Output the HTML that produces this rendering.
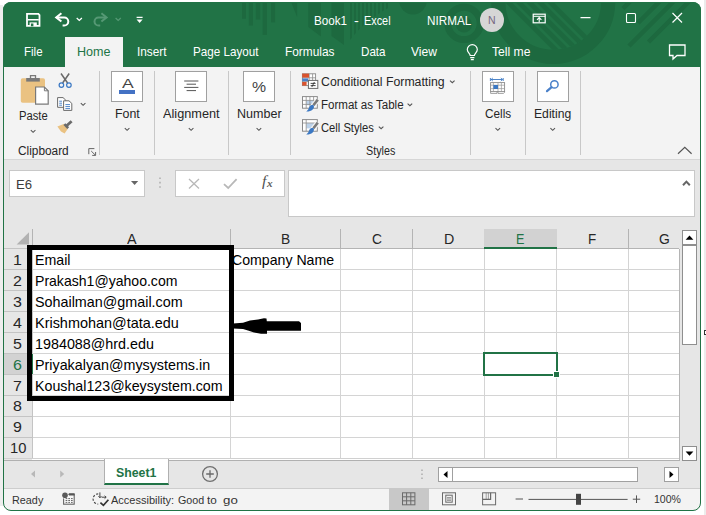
<!DOCTYPE html>
<html lang="en"><head><meta charset="utf-8"><title>Book1 - Excel</title>
<style>
html,body{margin:0;padding:0;background:#fff;}
body{width:706px;height:515px;overflow:hidden;font-family:"Liberation Sans",sans-serif;}
#app{position:relative;width:706px;height:515px;overflow:hidden;background:#fff;}
#clip{position:absolute;left:0;top:0;width:706px;height:515px;clip-path:inset(2px 5px 4px 3px round 8px);background:#e6e6e6;}
#frame{position:absolute;left:3px;top:2px;width:698px;height:509px;box-sizing:border-box;border:1px solid #217346;border-radius:8px;}
.a{position:absolute;box-sizing:border-box;}
.t{position:absolute;white-space:pre;line-height:1;transform-origin:0 0;display:block;}
.box{position:absolute;box-sizing:border-box;background:#fff;border:1px solid #a0a0a0;}
.sep{position:absolute;width:1px;top:71px;height:84px;background:#c8c8c8;}
.hl{position:absolute;height:1px;background:#d4d4d4;left:32px;width:647px;}
.vl{position:absolute;width:1px;background:#d4d4d4;top:249px;height:210px;}
.hs{position:absolute;width:1px;background:#b4b4b4;top:229px;height:19px;}
.rl{position:absolute;height:1px;background:#c4c4c4;left:4px;width:28px;}
svg{position:absolute;overflow:visible;}

</style></head>
<body>
<div id="app">
<div id="clip">
<!-- title + tab row -->
<div class="a" id="titlebar" style="left:0;top:0;width:706px;height:67px;background:#217346;"></div>
<svg id="deco" style="left:0;top:0" width="706" height="67" viewBox="0 0 706 67">
 <defs>
  <clipPath id="cpDisc"><circle cx="553.25" cy="2" r="47.75"/></clipPath>
  <clipPath id="cpHatch"><path d="M348,0 H392 V6 C380,12 362,24 350,40 H348 Z"/></clipPath>
 </defs>
 <g fill="#1d693f">
  <rect x="242" y="0" width="4" height="18.7"/><rect x="248.8" y="0" width="4.2" height="25.5"/><rect x="255.8" y="0" width="4.4" height="19.5"/><rect x="262.6" y="0" width="4.4" height="34.8"/><rect x="271.1" y="0" width="4" height="22.4"/>
  <polygon points="290.3,0 297.1,0 297.1,17"/>
  <polygon points="308.2,0 320.9,0 320.9,36.5 308.2,27"/>
  <polygon points="331.5,0 344,0 344,45 331.5,36"/>
  <path d="M399,0 A14,14.5 0 0 0 427,0 Z"/>
  <circle cx="464" cy="24.5" r="8"/>
 </g>
 <g clip-path="url(#cpHatch)" stroke="#1d693f" stroke-width="2">
  <path d="M351,0 V45 M355,0 V45 M359,0 V45 M363,0 V45 M367,0 V45 M371,0 V45 M375,0 V45 M379,0 V45 M383,0 V45 M387,0 V45"/>
 </g>
 <g fill="none" stroke="#1d693f">
  <circle cx="553.25" cy="2" r="54.9" stroke-width="14.25"/>
  <circle cx="464" cy="23.4" r="16.2" stroke-width="7"/>
 </g>
 <g clip-path="url(#cpDisc)" stroke="#1d693f" stroke-width="4.6">
  <path d="M496,-10 L566,60 M506.5,-10 L576.5,60 M517,-10 L587,60 M527.5,-10 L597.5,60 M538,-10 L608,60"/>
 </g>
 <g stroke="#1d693f" stroke-width="4.4">
  <path d="M623,8.5 L632,-0.5 M638,23 L662,-1 M629,46 L676,-1 M648.5,42 L692,-1.5"/>
 </g>
</svg>
<div class="a" id="hometab" style="left:65px;top:37px;width:58px;height:30px;background:#f3f3f3;"></div>
<!-- ribbon -->
<div class="a" id="ribbon" style="left:0;top:67px;width:706px;height:92px;background:#f3f3f3;"></div>
<div class="a" style="left:0;top:159px;width:706px;height:1px;background:#d6d6d6;"></div>
<div class="sep" style="left:99px"></div><div class="sep" style="left:154px"></div><div class="sep" style="left:228px"></div><div class="sep" style="left:290px"></div><div class="sep" style="left:470px"></div><div class="sep" style="left:525px"></div><div class="sep" style="left:580px"></div>
<div class="box" style="left:111px;top:71px;width:32px;height:31px"></div>
<div class="box" style="left:175px;top:71px;width:32px;height:31px"></div>
<div class="box" style="left:243px;top:71px;width:32px;height:31px"></div>
<div class="box" style="left:482px;top:71px;width:32px;height:31px"></div>
<div class="box" style="left:537px;top:71px;width:32px;height:31px"></div>
<div class="a" style="left:119px;top:90px;width:16px;height:4px;background:#4472c4"></div>
<!-- formula bar -->
<div class="box" style="left:9px;top:170px;width:136px;height:27px;border-color:#c8c8c8"></div>
<div class="box" style="left:175px;top:170px;width:110px;height:27px;border-color:#c8c8c8"></div>
<div class="box" style="left:288px;top:170px;width:407px;height:47px;border-color:#c8c8c8"></div>
<!-- grid -->
<div class="a" id="gridbg" style="left:32px;top:249px;width:647px;height:211px;background:#fff"></div>
<div class="a" id="hdr6" style="left:4px;top:354px;width:28px;height:21px;background:#d2d2d2;"></div>
<div class="a" style="left:4px;top:248px;width:28px;height:1px;background:#c4c4c4"></div>
<div class="a" style="left:32px;top:248px;width:647px;height:1px;background:#b4b4b4"></div>
<div class="hl" style="top:269px"></div>
<div class="rl" style="top:269px"></div>
<div class="hl" style="top:290px"></div>
<div class="rl" style="top:290px"></div>
<div class="hl" style="top:311px"></div>
<div class="rl" style="top:311px"></div>
<div class="hl" style="top:332px"></div>
<div class="rl" style="top:332px"></div>
<div class="hl" style="top:353px"></div>
<div class="rl" style="top:353px"></div>
<div class="hl" style="top:374px"></div>
<div class="rl" style="top:374px"></div>
<div class="hl" style="top:395px"></div>
<div class="rl" style="top:395px"></div>
<div class="hl" style="top:416px"></div>
<div class="rl" style="top:416px"></div>
<div class="hl" style="top:437px"></div>
<div class="rl" style="top:437px"></div>
<div class="vl" style="left:230px"></div>
<div class="hs" style="left:230px"></div>
<div class="vl" style="left:340px"></div>
<div class="hs" style="left:340px"></div>
<div class="vl" style="left:412px"></div>
<div class="hs" style="left:412px"></div>
<div class="vl" style="left:484px"></div>
<div class="hs" style="left:484px"></div>
<div class="vl" style="left:556px"></div>
<div class="hs" style="left:556px"></div>
<div class="vl" style="left:628px"></div>
<div class="hs" style="left:628px"></div>
<div class="hs" style="left:32px"></div>
<div class="a" style="left:32px;top:249px;width:1px;height:210px;background:#c4c4c4"></div>
<div class="a" id="hdrE" style="left:484px;top:229px;width:73px;height:20px;background:#d2d2d2;border-bottom:2px solid #217346"></div>
<div class="a" style="left:4px;top:458px;width:675px;height:1px;background:#d0d0d0"></div>
<div class="a" style="left:4px;top:460px;width:676px;height:1px;background:#b0b0b0"></div>
<div class="a" style="left:679px;top:249px;width:1px;height:211px;background:#b4b4b4"></div>
<!-- selection -->
<div class="a" id="sel" style="left:483px;top:352px;width:75px;height:24px;border:2px solid #217346;"></div>
<div class="a" style="left:553px;top:371px;width:7px;height:7px;background:#fff"></div>
<div class="a" style="left:554px;top:372px;width:5px;height:5px;background:#217346"></div>
<!-- vertical scrollbar -->
<div class="box" style="left:682px;top:230px;width:15px;height:15px;border-color:#8f8f8f"></div>
<div class="box" style="left:682px;top:245px;width:15px;height:100px;border-color:#8f8f8f"></div>
<div class="box" style="left:682px;top:446px;width:15px;height:15px;border-color:#8f8f8f"></div>
<svg style="left:682px;top:230px" width="15" height="15"><polygon points="3.6,9.8 11.4,9.8 7.5,5.4" fill="#000"/></svg>
<svg style="left:682px;top:446px" width="15" height="15"><polygon points="3.6,5.4 11.4,5.4 7.5,9.8" fill="#000"/></svg>
<!-- sheet tab bar -->
<div class="a" id="sheettab" style="left:104px;top:459px;width:65px;height:26px;background:#fff;border-bottom:2px solid #217346;border-right:1px solid #b0b0b0;border-left:1px solid #b0b0b0"></div>
<div class="box" style="left:438px;top:467px;width:15px;height:15px"></div>
<div class="box" style="left:452px;top:467px;width:186px;height:15px"></div>
<div class="box" style="left:664px;top:467px;width:15px;height:15px"></div>
<svg style="left:438px;top:467px" width="15" height="15"><polygon points="9.5,4 9.5,11 5.5,7.5" fill="#000"/></svg>
<svg style="left:664px;top:467px" width="15" height="15"><polygon points="5.5,4 5.5,11 9.5,7.5" fill="#000"/></svg>
<!-- status bar -->
<div class="a" id="status" style="left:0;top:488px;width:706px;height:27px;background:#f3f3f3;border-top:1px solid #cdcdcd"></div>
<div class="a" style="left:389px;top:488px;width:40px;height:23px;background:#c8c8c8"></div>
<!-- QAT -->
<svg style="left:0;top:0" width="706" height="67" viewBox="0 0 706 67" fill="none" stroke="#fff" stroke-width="1.4">
 <!-- save -->
 <path d="M27,13.9 H38.4 L39.5,15 V25.9 H27 Z" stroke-width="1.8"/>
 <path d="M27.6,19.8 H38.8" stroke-width="1.6"/>
 <rect x="29.6" y="22.4" width="7.2" height="3.6" fill="#fff" stroke="none"/>
 <rect x="30.9" y="23.5" width="2.5" height="2.8" fill="#217346" stroke="none"/>
 <!-- undo -->
 <path d="M61.4,13.3 L56.2,17.4 L61.4,21.5" stroke-width="2"/>
 <path d="M56.6,17.4 H64.2 A4.1,4.1 0 0 1 64.2,25.6 H62.6" stroke-width="2"/>
 <path d="M76.7,18 L79.3,20.4 L81.9,18" stroke-width="1.3"/>
 <!-- redo dim -->
 <g stroke="#559874">
 <path d="M101.4,13.3 L106.6,17.4 L101.4,21.5" stroke-width="2"/>
 <path d="M106.2,17.4 H98.6 A4.1,4.1 0 0 0 98.6,25.6 H100.2" stroke-width="2"/>
 <path d="M115.6,18 L118.2,20.4 L120.8,18" stroke-width="1.3"/>
 </g>
 <!-- customize -->
 <path d="M136.6,17.4 H142.6" stroke-width="1.3"/>
 <polygon points="136.6,19.6 142.6,19.6 139.6,23" fill="#fff" stroke="none"/>
 <!-- ribbon display options -->
 <rect x="533.2" y="14.2" width="12" height="8.6" stroke-width="1.2"/>
 <path d="M533.2,16.3 H545.2" stroke-width="1"/>
 <path d="M539.2,22 V18 M537,19.8 L539.2,17.6 L541.4,19.8" stroke-width="1.1"/>
 <!-- min / max / close -->
 <path d="M580.5,17.6 H590.5" stroke-width="1.1"/>
 <rect x="626.5" y="13.5" width="9" height="9" rx="1" stroke-width="1.1"/>
 <path d="M672.5,13 L682,22.5 M682,13 L672.5,22.5" stroke-width="1.2"/>
 <!-- lightbulb -->
 <path d="M470.2,55.5 C470.2,53.5 467.3,52.5 467.3,49.6 A5,5 0 0 1 477.3,49.6 C477.3,52.5 474.4,53.5 474.4,55.5 Z" stroke-width="1.2"/>
 <path d="M470.2,57.6 H474.4 M470.8,59.6 H473.8" stroke-width="1.1"/>
 <!-- comment -->
 <path d="M669.5,45 H685 V55.5 H677 L673,59 V55.5 H669.5 Z" stroke-width="1.3"/>
</svg>
<!-- avatar -->
<div class="a" style="left:480px;top:8px;width:24px;height:24px;border-radius:12px;background:#d6d6d6"></div>
<!-- ribbon icons -->
<svg style="left:0;top:0" width="706" height="160" viewBox="0 0 706 160" fill="none">
 <!-- paste -->
 <rect x="20.8" y="78.2" width="24.2" height="24.5" rx="1.8" fill="#eac282"/>
 <rect x="26.2" y="78" width="13.6" height="3.6" fill="#797979"/>
 <path d="M30.5,78.5 V75.6 H35.5 V78.5" stroke="#797979" stroke-width="1.3"/>
 <path d="M35.6,87 H44.4 L48.2,90.8 V104.2 H35.6 Z" fill="#fff" stroke="#797979" stroke-width="1.2"/>
 <path d="M44.4,87 V90.8 H48.2" stroke="#797979" stroke-width="1"/>
 <path d="M30.8,130.2 L33.1,132.3 L35.4,130.2" stroke="#555" stroke-width="1.1"/>
 <!-- scissors -->
 <path d="M61,73.5 L67.6,83 M69.2,73.5 L62.6,83" stroke="#6a6a6a" stroke-width="1.5"/>
 <circle cx="61.4" cy="85.1" r="2.3" stroke="#3b78c3" stroke-width="1.2"/>
 <circle cx="68.9" cy="85.1" r="2.3" stroke="#3b78c3" stroke-width="1.2"/>
 <!-- copy -->
 <path d="M57.6,97.6 H63 L65.8,100.2 V107.3 H57.6 Z" fill="#fff" stroke="#6a6a6a" stroke-width="1"/>
 <path d="M63.6,100.8 H69 L71.8,103.4 V110.4 H63.6 Z" fill="#fff" stroke="#6a6a6a" stroke-width="1"/>
 <path d="M59.2,101.2 H62 M59.2,103.2 H62 M59.2,105.2 H62 M65.4,104.6 H70 M65.4,106.6 H70 M65.4,108.6 H70" stroke="#3b78c3" stroke-width="0.9"/>
 <path d="M80.8,103.2 L83.1,105.3 L85.4,103.2" stroke="#555" stroke-width="1.1"/>
 <!-- format painter -->
 <polygon points="57.4,126.6 63.6,124 68,128.6 64.6,133.6 61,131.4" fill="#eac282"/>
 <path d="M64.4,124.2 L68.2,128.2" stroke="#6a6a6a" stroke-width="2.6"/>
 <path d="M66.6,125.8 L71.6,121.2" stroke="#6a6a6a" stroke-width="2.8"/>
 <!-- clipboard launcher -->
 <path d="M88.8,154.2 V148.6 H94.4" stroke="#666" stroke-width="1"/>
 <path d="M91.2,151 L95.4,155.2 M95.6,152 V155.4 H92.2" stroke="#666" stroke-width="1"/>
 <!-- chevrons under big buttons -->
 <g stroke="#555" stroke-width="1.1">
 <path d="M124.8,128.2 L127.1,130.3 L129.4,128.2"/>
 <path d="M188.8,128.2 L191.1,130.3 L193.4,128.2"/>
 <path d="M256.6,128.2 L258.9,130.3 L261.2,128.2"/>
 <path d="M495.5,128.2 L497.8,130.3 L500.1,128.2"/>
 <path d="M550.4,128.2 L552.7,130.3 L555,128.2"/>
 <path d="M450,80.6 L452.3,82.7 L454.6,80.6"/>
 <path d="M407.6,103.6 L409.9,105.7 L412.2,103.6"/>
 <path d="M378.8,126.6 L381.1,128.7 L383.4,126.6"/>
 </g>
 <!-- alignment lines -->
 <path d="M184.2,81 H198.4 M186.6,84.2 H196 M184.2,87.4 H198.4 M186.6,90.6 H196" stroke="#555" stroke-width="1"/>
 <!-- collapse ribbon -->
 <path d="M678,153.8 L684.8,147.4 L691.6,153.8" stroke="#555" stroke-width="1.2"/>
</svg>
<svg style="left:0;top:0" width="706" height="160" viewBox="0 0 706 160" fill="none">
 <!-- conditional formatting -->
 <rect x="302.4" y="73.8" width="13.2" height="11.8" fill="#fff" stroke="#8a8a8a" stroke-width="0.9"/>
 <path d="M302.4,77.8 H315.6 M302.4,81.6 H315.6 M309.2,73.8 V85.6 M312.6,73.8 V85.6" stroke="#8a8a8a" stroke-width="0.8"/>
 <rect x="302.2" y="73.6" width="6.8" height="4" fill="#d9532e"/>
 <rect x="302.2" y="78.4" width="6" height="2.8" fill="#4a80c9"/>
 <rect x="302.2" y="82" width="4.4" height="3.6" fill="#d9532e"/>
 <rect x="308.4" y="80.4" width="9.4" height="8" fill="#fff" stroke="#6a6a6a" stroke-width="1"/>
 <path d="M310.6,83.4 H315.6 M310.6,85.6 H315.6 M314.4,82 L311.8,87" stroke="#333" stroke-width="0.9"/>
 <!-- format as table -->
 <g id="fat">
 <rect x="302.5" y="96.6" width="14.8" height="11.6" fill="#fff" stroke="#8a8a8a" stroke-width="1"/>
 <rect x="306.4" y="100.6" width="7.4" height="4.6" fill="#bcd2ea"/>
 <path d="M302.5,100.4 H317.3 M302.5,104.4 H317.3 M306.2,96.6 V108.2 M309.9,96.6 V108.2 M313.6,96.6 V108.2" stroke="#8a8a8a" stroke-width="0.8"/>
 <path d="M318,99.4 L312.6,106.2" stroke="#f3f3f3" stroke-width="5"/>
 <path d="M317.8,99.6 L313.4,105.2" stroke="#7a7a7a" stroke-width="2.6"/>
 <path d="M313.8,105.4 C314.6,108.6 311.6,111.6 306.2,111.4 C308.4,110.2 308.6,108.4 309.4,106.8 C310.4,105 312.4,104.4 313.8,105.4 Z" fill="#3b78c3"/>
 </g>
 <!-- cell styles -->
 <rect x="302.5" y="119.6" width="14.8" height="11.6" fill="#fff" stroke="#8a8a8a" stroke-width="1"/>
 <rect x="306.4" y="123.2" width="7.6" height="5.2" fill="#bcd2ea"/>
 <path d="M302.5,123 H317.3 M306.2,119.6 V131.2" stroke="#8a8a8a" stroke-width="0.8"/>
 <path d="M318,122.4 L312.6,129.2" stroke="#f3f3f3" stroke-width="5"/>
 <path d="M317.8,122.6 L313.4,128.2" stroke="#7a7a7a" stroke-width="2.6"/>
 <path d="M313.8,128.4 C314.6,131.6 311.6,134.6 306.2,134.4 C308.4,133.2 308.6,131.4 309.4,129.8 C310.4,128 312.4,127.4 313.8,128.4 Z" fill="#3b78c3"/>
</svg>
<svg style="left:0;top:0" width="706" height="160" viewBox="0 0 706 160" fill="none">
 <!-- cells icon -->
 <path d="M490.4,78 V81 M503.2,78 V81 M491,79.5 H502.6 M492.8,78 L491.2,79.5 L492.8,81 M500.8,78 L502.4,79.5 L500.8,81" stroke="#3b78c3" stroke-width="0.9"/>
 <rect x="490.6" y="82.6" width="14" height="9" fill="#fff" stroke="#8a8a8a" stroke-width="0.9"/>
 <path d="M490.6,85.2 H504.6 M490.6,88.6 H504.6 M493.4,82.6 V91.6 M498,82.6 V91.6 M501.4,82.6 V91.6" stroke="#9a9a9a" stroke-width="0.7"/>
 <rect x="493.4" y="85" width="4.6" height="4" fill="#3b78c3"/>
 <path d="M490.6,91.6 V93.4 H497 V91.6 M498,91.6 V93.4 H503.4 L504.6,92.4 V91.6" stroke="#8a8a8a" stroke-width="0.8"/>
 <!-- editing magnifier -->
 <circle cx="554.4" cy="84.4" r="3.7" stroke="#4a80c9" stroke-width="1.5" fill="#fff"/>
 <path d="M551.6,87.2 L547,91.2" stroke="#4a80c9" stroke-width="2.2" stroke-linecap="round"/>
</svg>
<svg style="left:0;top:160px" width="706" height="70" viewBox="0 160 706 70" fill="none">
 <polygon points="131,181 138.2,181 134.6,185" fill="#666"/>
 <path d="M160,177.4 V179 M160,181.8 V183.4 M160,186.2 V187.8" stroke="#a8a8a8" stroke-width="1.4"/>
 <path d="M189,179 L199,188.5 M199,179 L189,188.5" stroke="#b8b8b8" stroke-width="1.3"/>
 <path d="M224,184.2 L228.2,188 L236.6,179.2" stroke="#b8b8b8" stroke-width="1.8"/>
 <path d="M683,185.2 L686.4,181.6 L689.8,185.2" stroke="#666" stroke-width="2"/>
 <polygon points="16.6,244.5 29,244.5 29,232.3" fill="#b2b2b2"/>
</svg>
<div class="a" style="left:32px;top:354px;width:1px;height:20px;background:#217346"></div>
<svg style="left:0;top:455px" width="706" height="60" viewBox="0 455 706 60" fill="none">
 <!-- sheet nav -->
 <polygon points="35,470.6 35,477.4 31,474" fill="#b8b8b8"/>
 <polygon points="60.2,470.6 60.2,477.4 64.2,474" fill="#b8b8b8"/>
 <!-- new sheet -->
 <circle cx="210" cy="474" r="7.4" stroke="#707070" stroke-width="1.3"/>
 <path d="M206.2,474 H213.8 M210,470.2 V477.8" stroke="#6a6a6a" stroke-width="1.3"/>
 <!-- hscroll grip dots -->
 <path d="M422,469.4 V471 M422,473.4 V475 M422,477.4 V479" stroke="#a8a8a8" stroke-width="1.4"/>
 <!-- macro record icon -->
 <rect x="63.6" y="494.4" width="10.6" height="9.8" stroke="#666" stroke-width="1.1" fill="#f8f8f8"/>
 <path d="M69,494.4 H74.6" stroke="#555" stroke-width="2.2"/>
 <circle cx="65" cy="495.3" r="3.4" fill="#f3f3f3"/>
 <circle cx="65" cy="495.3" r="2.8" fill="#5a5a5a"/>
 <path d="M65.6,498.6 H72.8 M65.6,500.5 H72.8 M65.6,502.4 H72.8" stroke="#666" stroke-width="1" stroke-dasharray="1.7 1"/>
 <!-- accessibility icon -->
 <path d="M98.2,493.9 A5.1,5.1 0 0 0 98.2,504.1" stroke="#444" stroke-width="1.1" stroke-dasharray="2.2 1.5"/>
 <path d="M99.9,492.4 V497.6 M98.5,496.2 L99.9,497.8 L101.3,496.2" stroke="#444" stroke-width="1"/>
 <path d="M101.6,497.2 H106 M104.6,495.8 L106.2,497.2 L104.6,498.6" stroke="#444" stroke-width="1"/>
 <path d="M100.4,502.6 L103.4,505.4 L108.4,499.8" stroke="#333" stroke-width="1.7"/>
 <!-- view buttons -->
 <g stroke="#6a6a6a" stroke-width="1">
 <rect x="402.5" y="492.8" width="12.4" height="12"/>
 <path d="M402.5,496.8 H414.9 M402.5,500.8 H414.9 M406.6,492.8 V504.8 M410.8,492.8 V504.8"/>
 <rect x="442.5" y="492.8" width="13" height="12"/>
 <rect x="445.8" y="495.2" width="6.4" height="7"/>
 <path d="M447,497.6 H451 M447,499 H451 M447,500.4 H451" stroke-width="0.7"/>
 <rect x="482.6" y="492.8" width="13" height="12"/>
 <path d="M490.6,492.8 V499.4 H482.6" stroke-width="1.2"/>
 <path d="M486.2,492.8 V499.4 M488.4,492.8 V499.4" stroke-width="0.6"/>
 </g>
 <!-- zoom slider -->
 <path d="M515.6,499 H523 M528.5,499.4 H627.6" stroke="#555" stroke-width="1"/>
 <path d="M632.8,499.2 H640.2 M636.5,495.4 V503" stroke="#555" stroke-width="1"/>
 <rect x="576" y="493.8" width="5" height="11" fill="#444"/>
</svg>

<!-- black annotation -->
<div class="a" id="blackbox" style="left:27px;top:245px;width:207px;height:156px;border:5px solid #000"></div>
<svg style="left:0;top:0" width="706" height="515"><polygon points="233,323.4 243,322.8 250,320.6 258,319.4 264,318.2 266.5,318.4 266.8,321.2 299,321.2 301,323 301,330.7 267,330.7 267,333.8 261,333.8 254,332.4 248,330.6 243,329 233,328.6" fill="#000"/></svg>
</div>
<div class="a" style="left:0;top:5px;width:3px;height:501px;background:#eee"></div>
<div id="frame"></div>
<div class="a" style="left:704px;top:0;width:2px;height:515px;background:#ececec"></div>
<div class="a" style="left:704px;top:330px;width:4px;height:5px;border:1px solid #333;background:#fff"></div>

<span class="t" id="t0" style="left:313.7px;top:14.00px;font-size:13px;color:#fff;font-weight:normal;transform:scaleX(0.8974);">Book1</span>
<span class="t" id="t1" style="left:353.7px;top:14.00px;font-size:13px;color:#fff;font-weight:normal;transform:scaleX(1.1032);">-</span>
<span class="t" id="t2" style="left:364.2px;top:14.00px;font-size:13px;color:#fff;font-weight:normal;transform:scaleX(0.8363);">Excel</span>
<span class="t" id="t3" style="left:427.0px;top:14.00px;font-size:13px;color:#fff;font-weight:normal;transform:scaleX(0.9016);">NIRMAL</span>
<span class="t" id="t4" style="left:488.1px;top:14.69px;font-size:11px;color:#75677f;font-weight:normal;transform:scaleX(0.9586);">N</span>
<span class="t" id="t5" style="left:23.8px;top:45.87px;font-size:12.2px;color:#fff;font-weight:normal;transform:scaleX(0.9432);">File</span>
<span class="t" id="t6" style="left:136.8px;top:45.87px;font-size:12.2px;color:#fff;font-weight:normal;transform:scaleX(0.9685);">Insert</span>
<span class="t" id="t7" style="left:192.8px;top:45.87px;font-size:12.2px;color:#fff;font-weight:normal;transform:scaleX(0.9572);">Page Layout</span>
<span class="t" id="t8" style="left:284.8px;top:45.87px;font-size:12.2px;color:#fff;font-weight:normal;transform:scaleX(0.9750);">Formulas</span>
<span class="t" id="t9" style="left:360.8px;top:45.87px;font-size:12.2px;color:#fff;font-weight:normal;transform:scaleX(0.9524);">Data</span>
<span class="t" id="t10" style="left:411.3px;top:45.87px;font-size:12.2px;color:#fff;font-weight:normal;transform:scaleX(0.9932);">View</span>
<span class="t" id="t11" style="left:492.3px;top:45.87px;font-size:12.2px;color:#fff;font-weight:normal;transform:scaleX(0.9978);">Tell me</span>
<span class="t" id="t12" style="left:76.8px;top:45.87px;font-size:12.2px;color:#217346;font-weight:normal;transform:scaleX(1.0310);">Home</span>
<span class="t" id="t13" style="left:18.8px;top:109.54px;font-size:12px;color:#262626;font-weight:normal;transform:scaleX(0.9355);">Paste</span>
<span class="t" id="t14" style="left:114.7px;top:107.64px;font-size:12px;color:#262626;font-weight:normal;transform:scaleX(1.0330);">Font</span>
<span class="t" id="t15" style="left:162.7px;top:107.64px;font-size:12px;color:#262626;font-weight:normal;transform:scaleX(1.0606);">Alignment</span>
<span class="t" id="t16" style="left:236.6px;top:107.64px;font-size:12px;color:#262626;font-weight:normal;transform:scaleX(1.0450);">Number</span>
<span class="t" id="t17" style="left:484.7px;top:107.64px;font-size:12px;color:#262626;font-weight:normal;transform:scaleX(0.9789);">Cells</span>
<span class="t" id="t18" style="left:533.9px;top:107.64px;font-size:12px;color:#262626;font-weight:normal;transform:scaleX(1.0138);">Editing</span>
<span class="t" id="t19" style="left:18.0px;top:144.84px;font-size:12px;color:#262626;font-weight:normal;transform:scaleX(0.9870);">Clipboard</span>
<span class="t" id="t20" style="left:365.7px;top:144.64px;font-size:12px;color:#262626;font-weight:normal;transform:scaleX(0.8966);">Styles</span>
<span class="t" id="t21" style="left:320.9px;top:75.84px;font-size:12px;color:#262626;font-weight:normal;transform:scaleX(1.0246);">Conditional Formatting</span>
<span class="t" id="t22" style="left:320.9px;top:99.14px;font-size:12px;color:#262626;font-weight:normal;transform:scaleX(0.9625);">Format as Table</span>
<span class="t" id="t23" style="left:320.9px;top:121.84px;font-size:12px;color:#262626;font-weight:normal;transform:scaleX(0.9333);">Cell Styles</span>
<span class="t" id="t24" style="left:121.8px;top:76.63px;font-size:13.2px;color:#444;font-weight:normal;transform:scaleX(1.3310);">A</span>
<span class="t" id="t25" style="left:252.3px;top:79.33px;font-size:15.2px;color:#444;font-weight:normal;transform:scaleX(1.0415);">%</span>
<span class="t" id="t26" style="left:16.2px;top:177.66px;font-size:13.4px;color:#3c3c3c;font-weight:normal;transform:scaleX(0.9838);">E6</span>
<span class="t" id="t27" style="left:262.4px;top:173.28px;font-size:15.5px;color:#505050;font-weight:normal;transform:scaleX(1.0203);font-family:'Liberation Serif',serif;font-style:italic;">f</span>
<span class="t" id="t28" style="left:266.6px;top:178.71px;font-size:10.5px;color:#5e5e5e;font-weight:bold;transform:scaleX(1.0667);font-family:'Liberation Serif',serif;font-style:italic;">x</span>
<span class="t" id="t29" style="left:127.0px;top:231.81px;font-size:14.4px;color:#262626;font-weight:normal;transform:scaleX(0.9990);">A</span>
<span class="t" id="t30" style="left:280.8px;top:231.81px;font-size:14.4px;color:#262626;font-weight:normal;transform:scaleX(0.9584);">B</span>
<span class="t" id="t31" style="left:371.8px;top:231.81px;font-size:14.4px;color:#262626;font-weight:normal;transform:scaleX(0.9619);">C</span>
<span class="t" id="t32" style="left:443.8px;top:231.81px;font-size:14.4px;color:#262626;font-weight:normal;transform:scaleX(0.9907);">D</span>
<span class="t" id="t33" style="left:588.4px;top:231.81px;font-size:14.4px;color:#262626;font-weight:normal;transform:scaleX(0.9332);">F</span>
<span class="t" id="t34" style="left:659.1px;top:231.81px;font-size:14.4px;color:#262626;font-weight:normal;transform:scaleX(0.9649);">G</span>
<span class="t" id="t35" style="left:516.1px;top:231.81px;font-size:14.4px;color:#217346;font-weight:normal;transform:scaleX(0.8751);">E</span>
<span class="t" id="t36" style="left:13.3px;top:252.81px;font-size:14.4px;color:#262626;font-weight:normal;transform:scaleX(1.1115);">1</span>
<span class="t" id="t37" style="left:13.3px;top:273.76px;font-size:14.4px;color:#262626;font-weight:normal;transform:scaleX(1.1115);">2</span>
<span class="t" id="t38" style="left:13.3px;top:294.71px;font-size:14.4px;color:#262626;font-weight:normal;transform:scaleX(1.1115);">3</span>
<span class="t" id="t39" style="left:13.3px;top:315.66px;font-size:14.4px;color:#262626;font-weight:normal;transform:scaleX(1.1115);">4</span>
<span class="t" id="t40" style="left:13.3px;top:336.61px;font-size:14.4px;color:#262626;font-weight:normal;transform:scaleX(1.1115);">5</span>
<span class="t" id="t41" style="left:13.3px;top:357.56px;font-size:14.4px;color:#217346;font-weight:normal;transform:scaleX(1.1115);">6</span>
<span class="t" id="t42" style="left:13.3px;top:378.51px;font-size:14.4px;color:#262626;font-weight:normal;transform:scaleX(1.1115);">7</span>
<span class="t" id="t43" style="left:13.3px;top:399.46px;font-size:14.4px;color:#262626;font-weight:normal;transform:scaleX(1.1115);">8</span>
<span class="t" id="t44" style="left:13.3px;top:420.41px;font-size:14.4px;color:#262626;font-weight:normal;transform:scaleX(1.1115);">9</span>
<span class="t" id="t45" style="left:9.5px;top:441.36px;font-size:14.4px;color:#262626;font-weight:normal;transform:scaleX(1.0246);">10</span>
<span class="t" id="t46" style="left:35.3px;top:252.81px;font-size:14.4px;color:#000;font-weight:normal;transform:scaleX(0.9868);">Email</span>
<span class="t" id="t47" style="left:35.3px;top:273.76px;font-size:14.4px;color:#000;font-weight:normal;transform:scaleX(0.9768);">Prakash1@yahoo.com</span>
<span class="t" id="t48" style="left:35.3px;top:294.71px;font-size:14.4px;color:#000;font-weight:normal;transform:scaleX(0.9968);">Sohailman@gmail.com</span>
<span class="t" id="t49" style="left:35.3px;top:315.66px;font-size:14.4px;color:#000;font-weight:normal;transform:scaleX(1.0034);">Krishmohan@tata.edu</span>
<span class="t" id="t50" style="left:35.3px;top:336.61px;font-size:14.4px;color:#000;font-weight:normal;transform:scaleX(0.9963);">1984088@hrd.edu</span>
<span class="t" id="t51" style="left:35.3px;top:357.56px;font-size:14.4px;color:#000;font-weight:normal;transform:scaleX(0.9941);">Priyakalyan@mysystems.in</span>
<span class="t" id="t52" style="left:35.3px;top:378.51px;font-size:14.4px;color:#000;font-weight:normal;transform:scaleX(0.9886);">Koushal123@keysystem.com</span>
<span class="t" id="t53" style="left:232.3px;top:252.81px;font-size:14.4px;color:#000;font-weight:normal;transform:scaleX(0.9820);">Company Name</span>
<span class="t" id="t54" style="left:115.7px;top:466.92px;font-size:12.5px;color:#217346;font-weight:bold;transform:scaleX(0.9866);">Sheet1</span>
<span class="t" id="t55" style="left:12.0px;top:494.83px;font-size:10.6px;color:#333;font-weight:normal;transform:scaleX(1.0217);">Ready</span>
<span class="t" id="t56" style="left:111.2px;top:494.83px;font-size:10.6px;color:#333;font-weight:normal;transform:scaleX(1.0404);">Accessibility:</span>
<span class="t" id="t57" style="left:178.2px;top:494.83px;font-size:10.6px;color:#333;font-weight:normal;transform:scaleX(1.0104);">Good</span>
<span class="t" id="t58" style="left:206.5px;top:494.83px;font-size:10.6px;color:#333;font-weight:normal;transform:scaleX(1.1070);">to</span>
<span class="t" id="t59" style="left:223.0px;top:494.83px;font-size:10.6px;color:#333;font-weight:normal;transform:scaleX(1.2538);">go</span>
<span class="t" id="t60" style="left:654.1px;top:494.43px;font-size:10.6px;color:#333;font-weight:normal;transform:scaleX(0.9956);">100%</span>
</div>
</body></html>
